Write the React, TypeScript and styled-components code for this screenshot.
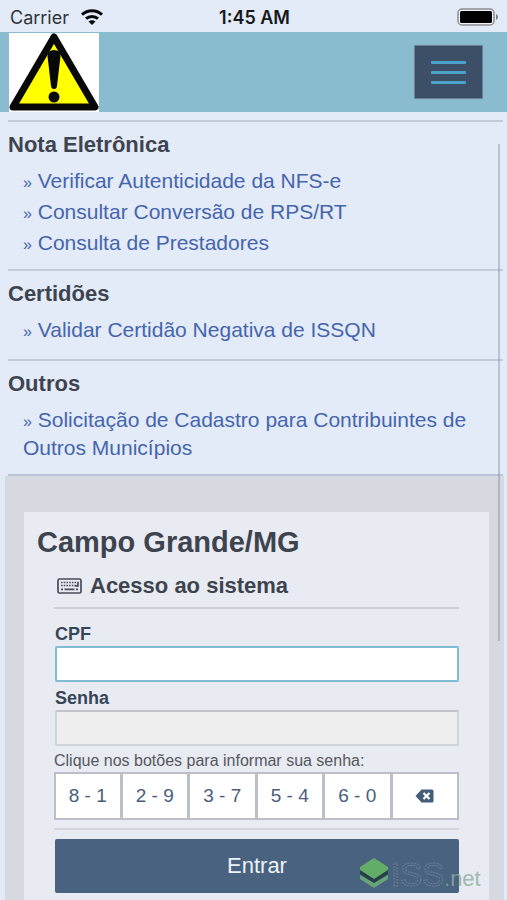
import React, { useState } from "react";
import styled, { createGlobalStyle } from "styled-components";

const GlobalStyle = createGlobalStyle`
  *, *::before, *::after { box-sizing: border-box; }
  body {
    margin: 0;
    background: #e4ebf8;
    color: #3d434f;
    font-family: "Liberation Sans", Arial, sans-serif;
  }
  h1, h2, p, ul { margin: 0; padding: 0; }
  button, input { font-family: inherit; }
`;

const Page = styled.div`
  position: relative;
  display: flex;
  flex-direction: column;
  min-height: 100vh;
`;

const StatusBar = styled.div`
  display: grid;
  grid-template-columns: 1fr auto 1fr;
  align-items: center;
  height: 32px;
  padding: 2px 8px 0 10px;
  color: #16181c;
  font-family: Inter, sans-serif;
  font-size: 18px;
`;

const Carrier = styled.span`
  display: flex;
  align-items: center;
  gap: 12px;
  color: #30333b;
`;

const Clock = styled.span`
  font-weight: 600;
`;

const Battery = styled.svg`
  justify-self: end;
`;

const TopBar = styled.header`
  display: flex;
  align-items: center;
  justify-content: space-between;
  height: 80px;
  padding: 0 24px 0 9px;
  background: #8abcd0;
`;

const WarningSign = styled.svg`
  display: block;
  width: 90px;
  height: 79px;
  background: #fff;
`;

const MenuButton = styled.button`
  display: flex;
  flex-direction: column;
  align-items: center;
  justify-content: center;
  gap: 7px;
  width: 69px;
  height: 54px;
  padding: 0;
  border: 1px solid #6d7f90;
  background: #3d4f66;
`;

const MenuLine = styled.span`
  width: 35px;
  height: 3px;
  border-radius: 1px;
  background: #4ba3c9;
`;

const Services = styled.nav`
  margin: 8px 4px 0 8px;
  border-bottom: 2px solid #bcc4d8;
`;

const ServiceGroup = styled.section`
  min-height: 90px;
  padding: 9px 0 12px;
  border-top: 2px solid #c4cbdc;
`;

const GroupTitle = styled.h2`
  font-size: 22px;
  line-height: 28px;
`;

const LinkList = styled.ul`
  display: flex;
  flex-direction: column;
  gap: 3px;
  margin-top: 8px;
  padding: 0 30px 0 15px;
  list-style: none;
  font-size: 21px;
  line-height: 28px;
`;

const ServiceLink = styled.a`
  color: #4565ad;
  text-decoration: none;
`;

const Marker = styled.span`
  font-size: 16px;
  line-height: 1;
`;

const LoginArea = styled.main`
  display: flex;
  flex: 1;
  flex-direction: column;
  margin: 0 3px 0 5px;
  padding: 36px 15px 0 19px;
  background: #d6d9e0;
`;

const Card = styled.form`
  flex: 1;
  padding: 14px 30px 5px;
  background: #e8ebf1;
`;

const City = styled.h1`
  margin-left: -17px;
  font-size: 29px;
  line-height: 32px;
`;

const CardTitle = styled.h2`
  display: flex;
  align-items: center;
  gap: 8px;
  margin-top: 12px;
  padding: 0 0 5px 3px;
  border-bottom: 2px solid #cbcfd6;
  font-size: 22px;
  line-height: 32px;
`;

const Label = styled.label`
  display: block;
  color: #36455a;
  font-size: 18px;
  font-weight: bold;
  line-height: 24px;
`;

const Fields = styled.div`
  display: flex;
  flex-direction: column;
  padding: 13px 0 0 1px;
`;

const TextBox = styled.input`
  width: 100%;
  height: 36px;
  margin-bottom: 4px;
  padding: 0 8px;
  border: 2px solid #7fbdd5;
  border-radius: 2px;
  outline: none;
  background: #fff;
  color: #36455a;
  font-size: 18px;

  &:read-only {
    border-color: #ccd5da;
    border-top-color: #bec4c9;
    background: #eeeeee;
  }
`;

const Hint = styled.p`
  color: #55585f;
  font-size: 16px;
  line-height: 22px;
`;

const Keypad = styled.div`
  display: grid;
  grid-template-columns: repeat(6, 1fr);
`;

const Key = styled.button`
  display: flex;
  align-items: center;
  justify-content: center;
  height: 48px;
  padding: 0;
  border: 2px solid #bcbfc9;
  background: #fff;
  color: #4a5e7c;
  font-size: 19px;

  & + & {
    border-left-width: 1px;
  }
`;

const Submit = styled.button`
  display: block;
  width: 100%;
  height: 54px;
  border: 0;
  border-radius: 2px;
  background: #486280;
  color: #eef3fa;
  font-size: 22px;
`;

const Actions = styled.div`
  margin-top: 8px;
  padding: 9px 0 0 1px;
  border-top: 2px solid #d3d6dd;
`;

const ScrollIndicator = styled.div`
  position: absolute;
  top: 144px;
  right: 7px;
  width: 2px;
  height: 497px;
  background: rgba(90, 100, 125, 0.3);
`;

const Watermark = styled.svg`
  position: absolute;
  right: 20px;
  bottom: 6px;
  width: 128px;
  height: 40px;
  overflow: visible;
  pointer-events: none;
`;

const groups = [
  {
    title: "Nota Eletrônica",
    links: [
      "Verificar Autenticidade da NFS-e",
      "Consultar Conversão de RPS/RT",
      "Consulta de Prestadores",
    ],
  },
  { title: "Certidões", links: ["Validar Certidão Negativa de ISSQN"] },
  {
    title: "Outros",
    links: ["Solicitação de Cadastro para Contribuintes de Outros Municípios"],
  },
];

const keys = ["8 - 1", "2 - 9", "3 - 7", "5 - 4", "6 - 0"];

function Wifi() {
  return (
    <svg width="22" height="16" viewBox="0 0 22 16" fill="none" stroke="#08090b" strokeWidth="3">
      <path d="M1 5.6C6.6.3 15.4.3 21 5.6" />
      <path d="M5 9.7c3.4-3.1 8.6-3.1 12 0" />
      <path d="M11 16l-3.5-3.4c2-1.8 5-1.8 7 0z" fill="#08090b" stroke="none" />
    </svg>
  );
}

function KeyboardIcon() {
  return (
    <svg width="25" height="16" viewBox="0 0 25 16" fill="none" stroke="#474c57">
      <rect x="1" y="1" width="23" height="14" rx="1.5" strokeWidth="1.7" />
      <path d="M4 4.5h15M4 7.5h15" strokeWidth="1.6" strokeDasharray="1.6 1.1" />
      <path d="M4 11.3h2M7.5 11.3h10M19 11.3h2M21 3.8v4h-3" strokeWidth="1.7" />
    </svg>
  );
}

function BackspaceIcon() {
  return (
    <svg width="19" height="14" viewBox="0 0 19 14">
      <path d="M6.5.5H17Q18.5.5 18.5 2v10q0 1.5-1.5 1.5H6.5L.5 7z" fill="#455d7d" />
      <path d="M8.5 4l6 6M14.5 4l-6 6" stroke="#fff" strokeWidth="2.3" />
    </svg>
  );
}

export default function App() {
  const [cpf, setCpf] = useState("");
  const [password, setPassword] = useState("");

  return (
    <Page>
      <GlobalStyle />
      <StatusBar>
        <Carrier>
          Carrier
          <Wifi />
        </Carrier>
        <Clock>1:45 AM</Clock>
        <Battery width="42" height="18" viewBox="0 0 42 18">
          <rect x="1" y="1" width="36" height="16" rx="4" fill="#f1f3f8" stroke="#8b8d93" strokeWidth="1.5" />
          <rect x="3" y="3" width="32" height="12" rx="1.5" fill="#000" />
          <path d="M39 6q2 1 2 3t-2 3z" fill="#777b82" />
        </Battery>
      </StatusBar>
      <TopBar>
        <WarningSign viewBox="0 0 90 79" role="img" aria-label="Aviso">
          <path d="M45 4L86 74H4z" fill="#ffff00" stroke="#080808" strokeWidth="7" strokeLinejoin="round" />
          <path d="M38.500 23q0-6 6.500-6t6.500 6L48 53q-.3 3-3 3t-3-3z" fill="#080808" />
          <circle cx="45" cy="64" r="5.500" fill="#080808" />
        </WarningSign>
        <MenuButton type="button" aria-label="Menu">
          <MenuLine />
          <MenuLine />
          <MenuLine />
        </MenuButton>
      </TopBar>
      <Services>
        {groups.map((group) => (
          <ServiceGroup key={group.title}>
            <GroupTitle>{group.title}</GroupTitle>
            <LinkList>
              {group.links.map((link) => (
                <li key={link}>
                  <ServiceLink href="#">
                    <Marker>»</Marker> {link}
                  </ServiceLink>
                </li>
              ))}
            </LinkList>
          </ServiceGroup>
        ))}
      </Services>
      <LoginArea>
        <Card onSubmit={(event) => event.preventDefault()}>
          <City>Campo Grande/MG</City>
          <CardTitle>
            <KeyboardIcon />
            Acesso ao sistema
          </CardTitle>
          <Fields>
            <Label htmlFor="cpf">CPF</Label>
            <TextBox id="cpf" value={cpf} onChange={(event) => setCpf(event.target.value)} />
            <Label htmlFor="senha">Senha</Label>
            <TextBox id="senha" type="password" value={password} readOnly />
          </Fields>
          <Hint>Clique nos botões para informar sua senha:</Hint>
          <Keypad>
            {keys.map((key) => (
              <Key key={key} type="button" onClick={() => setPassword(password + "•")}>
                {key}
              </Key>
            ))}
            <Key type="button" aria-label="Apagar" onClick={() => setPassword(password.slice(0, -1))}>
              <BackspaceIcon />
            </Key>
          </Keypad>
          <Actions>
            <Submit type="submit">Entrar</Submit>
          </Actions>
        </Card>
      </LoginArea>
      <ScrollIndicator />
      <Watermark viewBox="0 0 128 40" role="img" aria-label="ISS.net">
        <path d="M1 21l14 8 14-8v4l-14 9L1 25z" fill="#68a578" />
        <path d="M1 15l14 9 14-9v5l-14 9L1 20z" fill="#243f48" />
        <path d="M15 4l14 9v3l-14 9-14-9v-3z" fill="#64ad68" />
        <text x="32" y="32" fontFamily="Liberation Sans, sans-serif" fontSize="33" fill="none" stroke="#8294a8" strokeWidth="1" strokeDasharray="2 1" opacity="0.6">
          ISS
        </text>
        <text x="85" y="32" fontFamily="Liberation Sans, sans-serif" fontSize="22" fill="#8fae9f" opacity="0.8">
          <tspan fill="#62b678">.</tspan>net
        </text>
      </Watermark>
    </Page>
  );
}
